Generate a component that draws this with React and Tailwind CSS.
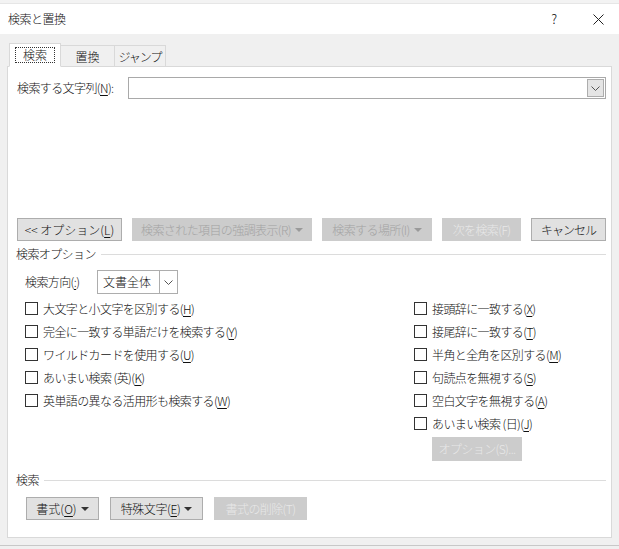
import React from 'react';

const font = { fontFamily: '"Noto Sans CJK JP", "Noto Sans", sans-serif' };

const Chevron = () => (
  <svg width="9" height="5" viewBox="0 0 9 5" fill="none">
    <path d="M0.5 0.5 L4.5 4.5 L8.5 0.5" stroke="#555" strokeWidth="1" />
  </svg>
);

const Caret = ({ color = '#333' }) => (
  <span className="inline-block ml-[4px] w-0 h-0 border-l-[4px] border-r-[4px] border-t-[4px] border-l-transparent border-r-transparent align-middle" style={{ borderTopColor: color }} />
);

const U = ({ children }) => <span className="underline underline-offset-2">{children}</span>;

const Btn = ({ w, children, disabled }) => (
  <div
    className={`h-[23px] flex items-center justify-center border text-[12px] ${disabled ? 'bg-[#cccccc] border-[#cccccc] text-[#a3a3a3]' : 'bg-[#e1e1e1] border-[#adadad] text-[#111]'}`}
    style={{ width: w }}
  >
    {children}
  </div>
);

const Check = ({ children }) => (
  <div className="h-[23px] flex items-center gap-[5px]">
    <div className="w-[13px] h-[13px] border border-[#333] bg-white" />
    <span className="text-[12px] text-[#111] tracking-[-0.6px]">{children}</span>
  </div>
);

const Section = ({ title }) => (
  <div className="h-[14px] flex items-center pr-[5px]">
    <span className="text-[12px] text-[#111] tracking-[-0.6px] pl-[8px]">{title}</span>
    <div className="flex-1 h-px bg-[#dcdcdc] ml-[5px]" />
  </div>
);

export default function App() {
  return (
    <div className="w-[619px] h-[549px] bg-[#f0f0f0] overflow-hidden flex flex-col font-light" style={font}>
      {/* title bar */}
      <div className="h-[34px] bg-white flex flex-col">
        <div className="h-[4px] bg-[#f3f3f3] border-b border-[#e6e6e6]" />
        <div className="flex-1 flex items-center pl-[8px] pr-[15px] text-[12px] text-[#111]">
          <span className="tracking-[-0.5px]">検索と置換</span>
          <span className="ml-auto mr-[36px] text-[13px]">?</span>
          <svg width="11" height="11" viewBox="0 0 11 11">
            <path d="M0.5 0.5 L10.5 10.5 M10.5 0.5 L0.5 10.5" stroke="#222" strokeWidth="1" />
          </svg>
        </div>
      </div>

      {/* tabs */}
      <div className="mt-[9px] pl-[9px] flex items-end h-[24px] -mb-px relative z-10">
        <div className="w-[52px] h-[24px] bg-white border border-[#d9d9d9] border-b-white flex items-center justify-center">
          <span className="px-[7px] h-[16px] leading-[14px] border border-dotted border-[#333] text-[12px] text-[#111]">検索</span>
        </div>
        <div className="w-[54px] h-[22px] border-t border-r border-[#d9d9d9] flex items-center justify-center text-[12px] text-[#111]">置換</div>
        <div className="w-[51px] h-[22px] border-t border-r border-[#d9d9d9] flex items-center justify-center text-[12px] text-[#111] tracking-[-1px]">ジャンプ</div>
      </div>

      {/* panel */}
      <div className="mx-[7px] w-[605px] h-[472px] bg-white border border-[#d9d9d9] flex flex-col">
        <div className="mt-[10px] h-[22px] flex items-center pl-[9px] pr-[5px]">
          <span className="w-[111px] text-[12px] text-[#111] tracking-[-0.6px]">検索する文字列(<U>N</U>):</span>
          <div className="flex-1 h-[22px] border border-[#a9a9a9] flex justify-end p-[1px]">
            <div className="w-[17px] h-full bg-[#e5e5e5] border border-[#adadad] flex items-center justify-center">
              <Chevron />
            </div>
          </div>
        </div>

        <div className="mt-[119px] flex pl-[9px] gap-[10px]">
          <Btn w={105}>&lt;&lt; オプション(<U>L</U>)</Btn>
          <Btn w={180} disabled>
            <span className="tracking-[-0.6px]">検索された項目の強調表示(R)</span><Caret color="#9a9a9a" />
          </Btn>
          <Btn w={110} disabled>
            <span className="tracking-[-0.6px]">検索する場所(I)</span><Caret color="#9a9a9a" />
          </Btn>
          <Btn w={79} disabled>
            <span className="tracking-[-0.6px] text-[#e8e8e8]">次を検索(F)</span>
          </Btn>
          <Btn w={75}>
            <span className="tracking-[-1px]">キャンセル</span>
          </Btn>
        </div>

        <div className="mt-[6px]">
          <Section title="検索オプション" />
        </div>

        <div className="mt-[9px] h-[24px] flex items-center pl-[17px]">
          <span className="w-[72px] text-[12px] text-[#111] tracking-[-0.6px]">検索方向(<U>:</U>)</span>
          <div className="w-[81px] h-[24px] border border-[#adadad] flex">
            <span className="flex-1 flex items-center pl-[5px] text-[12px] text-[#111]">文書全体</span>
            <div className="w-[18px] border-l border-[#adadad] flex items-center justify-center">
              <Chevron />
            </div>
          </div>
        </div>

        <div className="mt-[3px] flex pl-[17px]">
          <div className="w-[389px] flex flex-col">
            <Check>大文字と小文字を区別する(<U>H</U>)</Check>
            <Check>完全に一致する単語だけを検索する(<U>Y</U>)</Check>
            <Check>ワイルドカードを使用する(<U>U</U>)</Check>
            <Check>あいまい検索 (英)(<U>K</U>)</Check>
            <Check>英単語の異なる活用形も検索する(<U>W</U>)</Check>
          </div>
          <div className="flex flex-col">
            <Check>接頭辞に一致する(<U>X</U>)</Check>
            <Check>接尾辞に一致する(<U>T</U>)</Check>
            <Check>半角と全角を区別する(<U>M</U>)</Check>
            <Check>句読点を無視する(<U>S</U>)</Check>
            <Check>空白文字を無視する(<U>A</U>)</Check>
            <Check>あいまい検索 (日)(<U>J</U>)</Check>
            <div className="mt-[2px] ml-[18px] w-[90px] h-[24px] bg-[#cccccc] flex items-center justify-center text-[12px] text-[#e8e8e8] tracking-[-0.6px]">
              オプション(S)...
            </div>
          </div>
        </div>

        <div className="mt-[12px]">
          <Section title="検索" />
        </div>

        <div className="mt-[10px] flex pl-[18px] gap-[11px]">
          <Btn w={73}>書式(<U>O</U>)<Caret /></Btn>
          <Btn w={93}><span className="tracking-[-0.4px]">特殊文字(<U>E</U>)</span><Caret /></Btn>
          <Btn w={93} disabled>
            <span className="tracking-[-0.6px] text-[#e8e8e8]">書式の削除(T)</span>
          </Btn>
        </div>
      </div>

      <div className="mt-[7px] h-px bg-[#c8c8c8]" />
    </div>
  );
}
